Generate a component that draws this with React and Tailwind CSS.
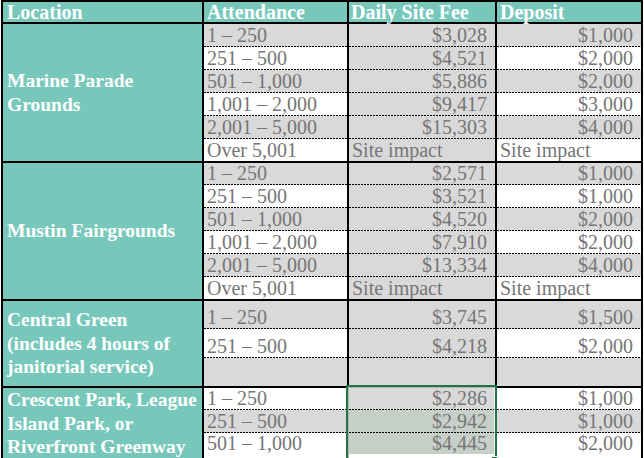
const sections = [
  {
    name: ['Marine Parade', 'Grounds'],
    stripe: [true, false, true, false, true, false],
    heights: [22, 22, 22, 22, 22, 22],
    rows: [
      ['1 – 250', '$3,028', '$1,000'],
      ['251 – 500', '$4,521', '$2,000'],
      ['501 – 1,000', '$5,886', '$2,000'],
      ['1,001 – 2,000', '$9,417', '$3,000'],
      ['2,001 – 5,000', '$15,303', '$4,000'],
      ['Over 5,001', 'Site impact', 'Site impact'],
    ],
  },
  {
    name: ['Mustin Fairgrounds'],
    stripe: [true, false, true, false, true, false],
    heights: [21, 22, 22, 22, 22, 22],
    rows: [
      ['1 – 250', '$2,571', '$1,000'],
      ['251 – 500', '$3,521', '$1,000'],
      ['501 – 1,000', '$4,520', '$2,000'],
      ['1,001 – 2,000', '$7,910', '$2,000'],
      ['2,001 – 5,000', '$13,334', '$4,000'],
      ['Over 5,001', 'Site impact', 'Site impact'],
    ],
  },
  {
    name: ['Central Green', '(includes 4 hours of', 'janitorial service)'],
    stripe: [true, false, true],
    heights: [27, 28, 28],
    rows: [
      ['1 – 250', '$3,745', '$1,500'],
      ['251 – 500', '$4,218', '$2,000'],
      ['', '', ''],
    ],
  },
  {
    name: ['Crescent Park, League', 'Island Park, or', 'Riverfront Greenway'],
    stripe: [false, true, false],
    heights: [21, 22, 21],
    rows: [
      ['1 – 250', '$2,286', '$1,000'],
      ['251 – 500', '$2,942', '$1,000'],
      ['501 – 1,000', '$4,445', '$2,000'],
    ],
    selected: true,
  },
];

const GRAY = 'bg-[#d9d9d9]';
const WHITE = 'bg-white';

// a row is its content height, then a 1px dotted rule unless it is the last one
function Cell({ h, last, bg, right, children }) {
  return (
    <div className={`flex shrink-0 flex-col ${bg}`}>
      <div
        style={{ height: h }}
        className={`flex items-end overflow-hidden whitespace-nowrap leading-[22px] ${
          right ? 'justify-end pr-[8px]' : 'pl-[3px]'
        }`}
      >
        {children}
      </div>
      {!last && (
        <div className="h-px bg-[repeating-linear-gradient(90deg,#000_0_2px,transparent_2px_3px)]" />
      )}
    </div>
  );
}

function Section({ s, last }) {
  const n = s.rows.length;
  return (
    <div className={`flex ${last ? '' : 'border-b-2 border-black'}`}>
      <div className="flex w-[201px] shrink-0 items-center overflow-hidden border-r-2 border-black bg-[#77c8bb] pl-[4px] text-[19.5px] font-bold leading-[23.5px] text-white">
        <div className="whitespace-nowrap">
          {s.name.map((l) => (
            <div key={l}>{l}</div>
          ))}
        </div>
      </div>

      <div className="flex w-[145px] shrink-0 flex-col border-r-2 border-black">
        {s.rows.map((r, i) => (
          <Cell key={i} h={s.heights[i]} last={i === n - 1} bg={s.stripe[i] ? GRAY : WHITE}>
            {r[0]}
          </Cell>
        ))}
      </div>

      <div className="relative flex w-[148px] shrink-0 flex-col border-r-2 border-black">
        {s.rows.map((r, i) => {
          const tinted = s.selected && i > 0;
          const isText = r[1] === 'Site impact';
          return (
            <Cell
              key={i}
              h={s.heights[i]}
              last={i === n - 1}
              bg={tinted ? 'bg-[#c6cfc8]' : GRAY}
              right={!isText}
            >
              {r[1]}
            </Cell>
          );
        })}
        {s.selected && (
          <>
            <div className="absolute -top-[3px] -right-[2px] -bottom-[2px] -left-[3px] z-10 border-2 border-[#217346]">
              <div className="h-full w-full border border-white/70" />
            </div>
            <div className="absolute -right-[2px] -bottom-[3px] z-20 h-[5px] w-[5px] bg-[#217346] outline outline-1 outline-white" />
          </>
        )}
      </div>

      <div className="flex w-[144px] shrink-0 flex-col">
        {s.rows.map((r, i) => {
          const isText = r[2] === 'Site impact';
          return (
            <Cell key={i} h={s.heights[i]} last={i === n - 1} bg={s.stripe[i] ? GRAY : WHITE} right={!isText}>
              {r[2]}
            </Cell>
          );
        })}
      </div>
    </div>
  );
}

export default function App() {
  return (
    <div className="h-[458px] w-[644px] overflow-hidden bg-white font-['Liberation_Serif',serif] text-[20px] text-[#767676]">
      <div className="ml-[1px] w-[642px] border-2 border-black">
        <div className="flex h-[22px] border-b-2 border-black bg-[#77c8bb] text-[20px] font-bold leading-[20px] text-white">
          <div className="flex w-[201px] shrink-0 items-center border-r-2 border-black pl-[4px]">Location</div>
          <div className="flex w-[145px] shrink-0 items-center border-r-2 border-black pl-[3px]">Attendance</div>
          <div className="flex w-[148px] shrink-0 items-center border-r-2 border-black pl-[2px]">Daily Site Fee</div>
          <div className="flex w-[144px] shrink-0 items-center pl-[3px]">Deposit</div>
        </div>
        {sections.map((s, i) => (
          <Section key={i} s={s} last={i === sections.length - 1} />
        ))}
      </div>
    </div>
  );
}
